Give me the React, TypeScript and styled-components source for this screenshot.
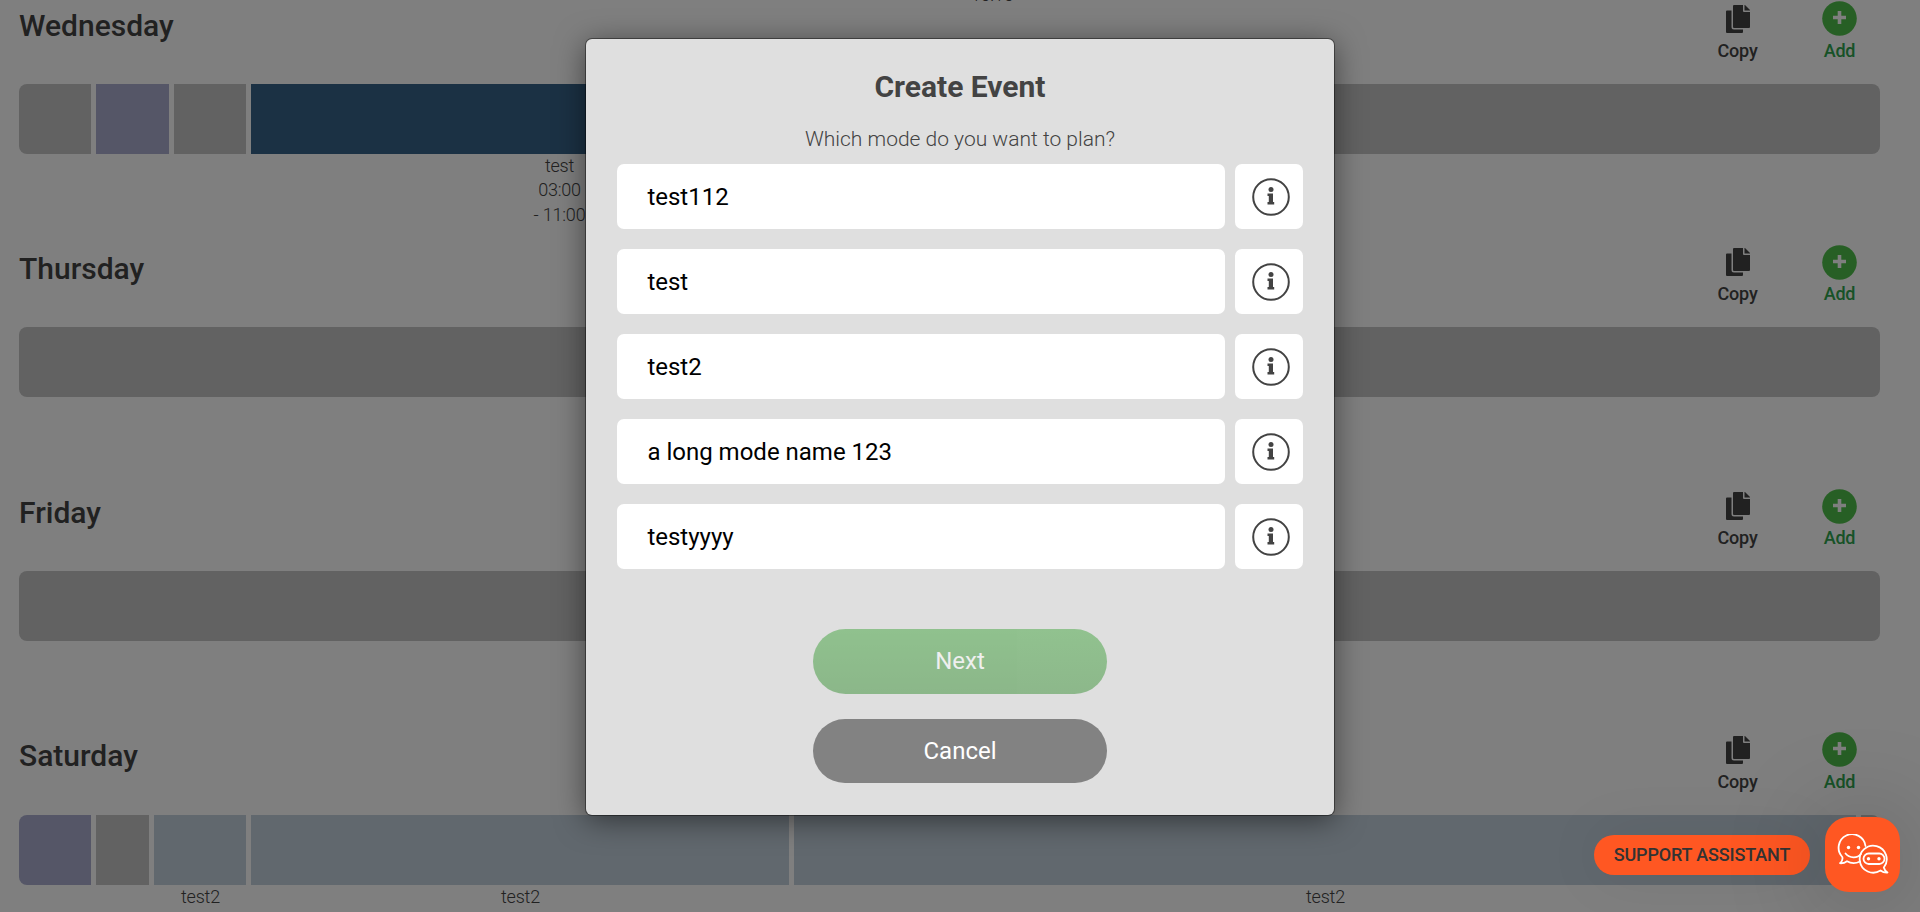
import React from "react";
import styled, { createGlobalStyle } from "styled-components";

const Global = createGlobalStyle`
  *{box-sizing:border-box}
  html,body{margin:0;height:912px;overflow:hidden;background:#fff}
  body{font-family:Roboto,"Liberation Sans",sans-serif;color:#434343}
`;
const Page = styled.main`
  position: relative; height: 912px; overflow: hidden; padding: 0 40px 0 19px;
`;
const Peek = styled.div`
  height: 7px; margin-bottom: -5.3px; display: flex; justify-content: center; align-items: flex-end;
  padding-left: 85px; font-size: 18px; font-weight: 300; line-height: 24px; letter-spacing: -.2px;
`;
const Day = styled.section`height: 243.67px;`;
const DayHead = styled.header`
  display: flex; justify-content: space-between; height: 82px;
`;
const DayName = styled.h2`
  margin: 5.8px 0 0; font-size: 30px; line-height: 36px; font-weight: 500;
`;
const Actions = styled.div`display: flex; gap: 62px; padding-right: 20.5px; margin-top: -2px;`;
const Action = styled.div<{ $green?: boolean }>`
  width: 40px; display: flex; flex-direction: column; align-items: center;
  font-size: 18px; line-height: 25.6px; font-weight: 500; letter-spacing: -.2px; white-space: nowrap;
  color: ${(p) => (p.$green ? "#2fa44f" : "#434343")};
`;
const IconSlot = styled.div`height: 38px; display: flex; align-items: center;`;
const Track = styled.div`display: flex; gap: 5px; height: 70px;`;
const Slot = styled.div<{ $w: number; $c: string }>`
  flex: ${(p) => p.$w} 0 0; min-width: 0; background: ${(p) => p.$c};
  display: flex; flex-direction: column; align-items: center;
  &:first-child { border-radius: 8px 0 0 8px; }
  &:last-child { border-radius: 0 8px 8px 0; }
  &:only-child { border-radius: 8px; }
`;
const SlotText = styled.div`
  margin-top: 70.3px; padding-left: 1px; font-size: 18px; line-height: 24.3px; font-weight: 300;
  letter-spacing: -.2px; text-align: center; white-space: pre-line;
`;
const Overlay = styled.div`
  position: absolute; inset: 0; background: rgba(0,0,0,.5);
  display: flex; justify-content: center; align-items: flex-start; padding-top: 39px;
`;
const Dialog = styled.div`
  width: 748px; height: 776px; border-radius: 6px; background: #dfdfdf; padding: 30px 31px 32px;
  display: flex; flex-direction: column; align-items: center;
  box-shadow: 0 0 0 1px rgba(0,0,0,.4), 0 5px 30px rgba(0,0,0,.5);
`;
const Title = styled.h1`margin: 0; font-size: 30px; line-height: 36px; font-weight: 700;`;
const Question = styled.p`margin: 20px 0 0; font-size: 21px; line-height: 28px; font-weight: 300;`;
const Modes = styled.div`
  align-self: stretch; margin-top: 11px; display: flex; flex-direction: column; gap: 20px;
`;
const Mode = styled.div`display: flex; gap: 10px; height: 65px;`;
const ModeName = styled.button`
  flex: 1; border: 0; border-radius: 7px; background: #fff; padding: 0 30.4px;
  font: 400 24px Roboto, sans-serif; color: #000; text-align: left;
`;
const InfoButton = styled.button`
  width: 68px; border: 0; border-radius: 7px; background: #fff; padding: 0 0 0 3px;
  display: flex; align-items: center; justify-content: center;
`;
const Pill = styled.button<{ $next?: boolean }>`
  width: 294px; height: ${(p) => (p.$next ? 65 : 64)}px; border: 0; border-radius: 33px; padding: 0 0 1px;
  font: 400 24px Roboto, sans-serif; color: #fff;
  margin-top: ${(p) => (p.$next ? 60 : 25)}px;
  background: ${(p) => (p.$next ? "linear-gradient(#43a53f, #3a9036)" : "#828282")};
  opacity: ${(p) => (p.$next ? 0.5 : 1)};
`;
const Support = styled.div`
  position: absolute; right: 20px; bottom: 20px; display: flex; align-items: center; gap: 15px;
`;
const SupportLabel = styled.div`
  width: 216px; height: 40px; border-radius: 20px; background: #ff5722; color: #333;
  display: flex; align-items: center; justify-content: center;
  font-size: 18px; font-weight: 500; letter-spacing: -.15px;
  box-shadow: 0 0 60px rgba(0,0,0,.08);
`;
const SupportButton = styled.div`
  width: 75px; height: 75px; border-radius: 24px; background: #ff5722;
  display: flex; align-items: center; justify-content: center;
  box-shadow: 0 6px 100px rgba(0,0,0,.3);
`;

const GREY = "#c4c4c4", LILAC = "#aaadcf", NAVY = "#366288", SKY = "#c3d0dd";
type S = { w: number; c: string; t?: string };
const days: { name: string; slots: S[] }[] = [
  { name: "Wednesday", slots: [
    { w: 72, c: GREY }, { w: 73, c: LILAC }, { w: 72, c: GREY },
    { w: 616, c: NAVY, t: "test\n03:00\n- 11:00" }, { w: 1008, c: GREY } ] },
  { name: "Thursday", slots: [{ w: 1, c: GREY }] },
  { name: "Friday", slots: [{ w: 1, c: GREY }] },
  { name: "Saturday", slots: [
    { w: 72, c: LILAC }, { w: 53, c: GREY }, { w: 92, c: SKY, t: "test2" },
    { w: 538, c: SKY, t: "test2" }, { w: 1062, c: SKY, t: "test2" }, { w: 19, c: GREY } ] },
];
const modes = ["test112", "test", "test2", "a long mode name 123", "testyyyy"];

const CopyIcon = () => (
  <svg width="24" height="28" viewBox="0 0 24 28" fill="#434343">
    <path d="M1 5.500h4.500V22q0 2.500 2.500 2.500H17V27q0 1-1 1H1q-1 0-1-1V6.500q0-1 1-1z" />
    <path d="M8 0h9v6q0 1 1 1h6v15q0 1-1 1H8q-1 0-1-1V1q0-1 1-1z" />
    <path d="M18.500 0h.5l5 5v.5h-5.500z" />
  </svg>
);
const AddIcon = () => (
  <svg width="35" height="35" viewBox="0 0 35 35">
    <circle cx="17.500" cy="17.500" r="17.300" fill="#4fbf4a" />
    <path d="M11 16.500h13M17.500 10v13" stroke="#fff" strokeWidth="3.600" />
  </svg>
);
const InfoIcon = () => (
  <svg width="38" height="38" viewBox="0 0 38 38">
    <circle cx="19" cy="19" r="17.800" fill="none" stroke="#434343" strokeWidth="2" />
    <circle cx="19" cy="11.600" r="2.500" fill="#434343" />
    <path d="M15.500 15.500h5.500v8.500h1.200v2.500h-6.700V24h1.300v-6h-1.300z" fill="#434343" />
  </svg>
);
const ChatIcon = () => (
  <svg width="52" height="42" viewBox="0 0 52 42" fill="none" stroke="#fff" strokeWidth="1.800" strokeLinecap="round" strokeLinejoin="round">
    <path d="M23 27.500c-4.500 2.200-9.500 1.800-13-.3-2 1.500-4.500 2.200-7 2 2-1.600 3-3.600 2.300-6.200A13.500 13.500 0 1 1 28.500 12" />
    <path d="M8.500 19.500c4 5 12 5 15.500.5" />
    <path d="M46.800 33.500A13.500 13.500 0 1 0 43.500 36.500c2 1.500 4 2.200 7 2-2-1.300-3.200-3-3.700-5z" />
    <rect x="26.500" y="19.500" width="21" height="10.500" rx="5.200" />
    <g fill="#fff" stroke="none"><circle cx="11.500" cy="13.500" r="1.700" /><circle cx="21.500" cy="13.500" r="1.700" /><circle cx="31.500" cy="24.700" r="1.700" /><circle cx="42" cy="24.700" r="1.700" /></g>
  </svg>
);

export default function App() {
  return (
    <Page>
      <Global />
      <Peek><span>10:15</span></Peek>
      {days.map((d) => (
        <Day key={d.name}>
          <DayHead>
            <DayName>{d.name}</DayName>
            <Actions>
              <Action><IconSlot><CopyIcon /></IconSlot>Copy</Action>
              <Action $green><IconSlot><AddIcon /></IconSlot>Add</Action>
            </Actions>
          </DayHead>
          <Track>
            {d.slots.map((s, i) => (
              <Slot key={i} $w={s.w} $c={s.c}>{s.t && <SlotText>{s.t}</SlotText>}</Slot>
            ))}
          </Track>
        </Day>
      ))}
      <Overlay>
        <Dialog>
          <Title>Create Event</Title>
          <Question>Which mode do you want to plan?</Question>
          <Modes>
            {modes.map((m) => (
              <Mode key={m}>
                <ModeName>{m}</ModeName>
                <InfoButton><InfoIcon /></InfoButton>
              </Mode>
            ))}
          </Modes>
          <Pill $next>Next</Pill>
          <Pill>Cancel</Pill>
        </Dialog>
      </Overlay>
      <Support>
        <SupportLabel>SUPPORT ASSISTANT</SupportLabel>
        <SupportButton><ChatIcon /></SupportButton>
      </Support>
    </Page>
  );
}
